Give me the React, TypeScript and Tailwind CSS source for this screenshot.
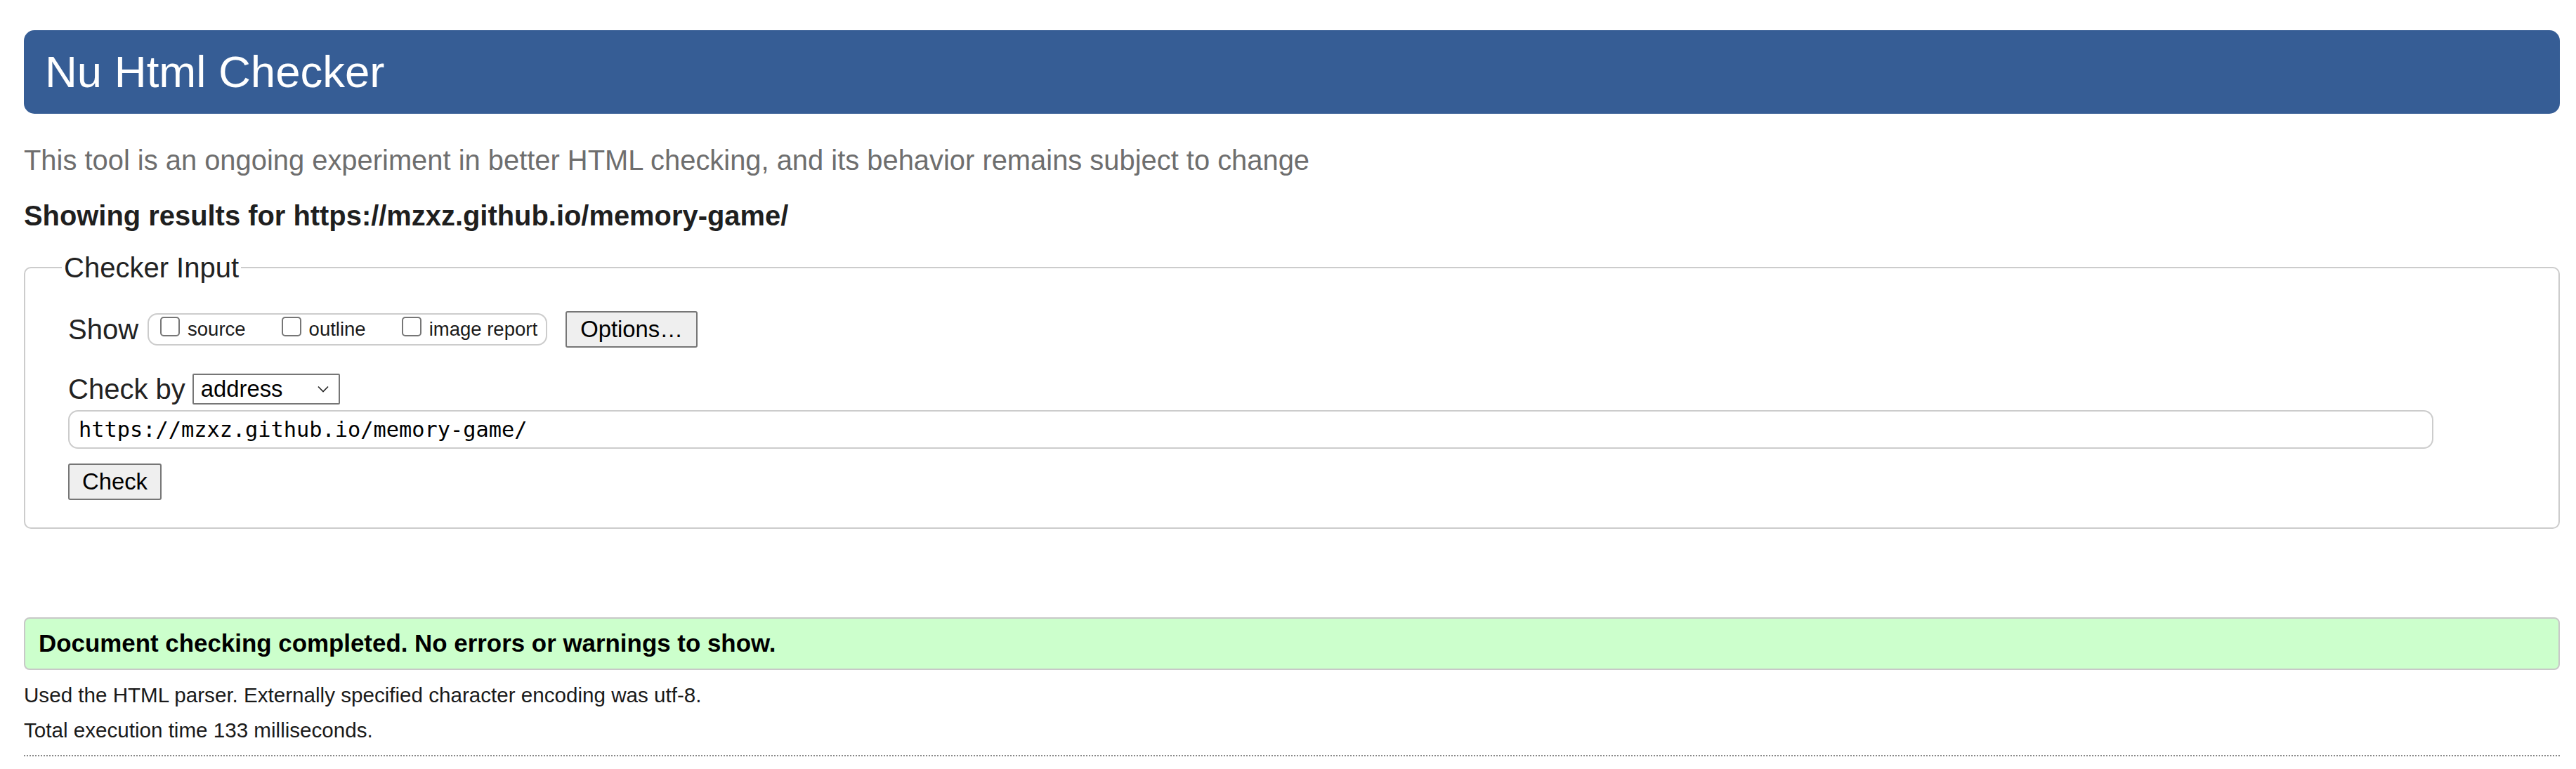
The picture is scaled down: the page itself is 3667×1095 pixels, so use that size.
import React from "react";

function Box({ label }: { label: string }) {
  return (
    <span className="flex items-center">
      <span className="mt-[-8px] inline-block h-[28px] w-[28px] rounded-[5px] border-2 border-[#767676] bg-white" />
      <span className="ml-[11px] text-[27.5px] text-[#1a1a1a]">{label}</span>
    </span>
  );
}

export default function App() {
  return (
    <div className="min-h-screen bg-white pl-[34px] pr-[23px] pt-[43px] text-[#222]" style={{ fontFamily: '"Liberation Sans", Arial, sans-serif' }}>
      <div className="flex h-[119px] items-center rounded-[15px] bg-[#365d95] pl-[30px]">
        <h1 className="text-[63.5px] leading-none text-white">Nu Html Checker</h1>
      </div>
      <p className="mt-[43px] text-[39.9px] leading-[46px] text-[#6e6e6e]">
        This tool is an ongoing experiment in better HTML checking, and its behavior remains subject to change
      </p>
      <p className="mt-[33px] text-[39.9px] font-bold leading-[46px] text-[#1f1f1f]">
        Showing results for https://mzxz.github.io/memory-game/
      </p>
      <fieldset className="mt-[28px] rounded-[10px] border-2 border-[#cccccc] pb-[39px] pl-[52px] pr-[40px]">
        <legend className="px-[3px] text-[40px] leading-[46px] text-[#222]">Checker Input</legend>
        <div className="pl-[9px]">
          <div className="mt-[39px] flex items-center">
            <span className="text-[40px] leading-[46px]">Show</span>
            <div className="ml-[13px] flex h-[46px] w-[569px] items-center rounded-[14px] border-2 border-[#cccccc] pl-[16px]">
              <Box label="source" />
              <span className="w-[51px]" />
              <Box label="outline" />
              <span className="w-[51px]" />
              <Box label="image report" />
            </div>
            <button className="ml-[26px] flex h-[52px] w-[188px] items-center justify-center rounded-[3px] border-2 border-[#767676] bg-[#efefef] text-[32.8px] text-black">
              Options…
            </button>
          </div>
          <div className="mt-[36px] flex items-center">
            <span className="text-[40px] leading-[46px]">Check by</span>
            <div className="ml-[10px] flex h-[44px] w-[210px] items-center justify-between rounded-[2px] border-2 border-[#767676] bg-white pl-[10px] pr-[14px] text-[32.8px] text-black">
              <span>address</span>
              <svg width="16" height="10" viewBox="0 0 16 10" fill="none">
                <path d="M1 1.5 L8 8.5 L15 1.5" stroke="#222" strokeWidth="1.6" />
              </svg>
            </div>
          </div>
          <div
            className="mt-[7px] flex h-[55px] w-[3367px] items-center rounded-[14px] border-2 border-[#cccccc] pl-[13px] text-[30.3px] text-black"
            style={{ fontFamily: '"DejaVu Sans Mono", "Liberation Mono", monospace' }}
          >
            https://mzxz.github.io/memory-game/
          </div>
          <button className="mt-[21px] flex h-[52px] w-[133px] items-center justify-center rounded-[3px] border-2 border-[#767676] bg-[#efefef] text-[32.8px] text-black">
            Check
          </button>
        </div>
      </fieldset>
      <div className="mt-[126px] flex h-[75px] items-center rounded-[8px] border-2 border-[#c8c8c8] bg-[#ccffcc] pl-[19px]">
        <p className="text-[34.9px] font-bold text-black">Document checking completed. No errors or warnings to show.</p>
      </div>
      <p className="mt-[19px] text-[29.6px] leading-[34.5px] text-[#1a1a1a]">
        Used the HTML parser. Externally specified character encoding was utf-8.
      </p>
      <p className="mt-[15.5px] text-[29.6px] leading-[34.5px] text-[#1a1a1a]">Total execution time 133 milliseconds.</p>
      <div className="mt-[17px] border-t-2 border-dotted border-[#888]" />
    </div>
  );
}
